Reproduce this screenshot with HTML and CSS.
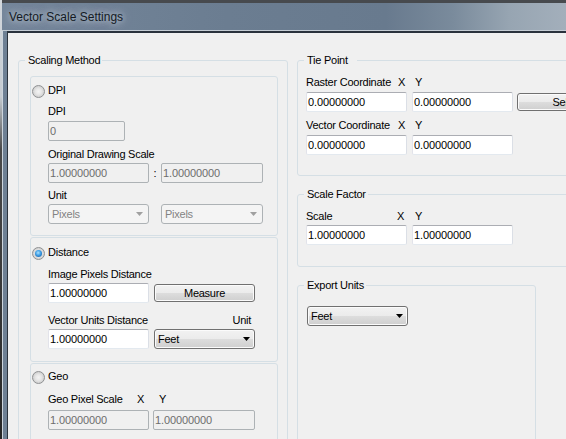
FILE: index.html
```html
<!DOCTYPE html>
<html>
<head>
<meta charset="utf-8">
<title>Vector Scale Settings</title>
<link rel="stylesheet" href="styles.css">
</head>
<body>
<div class="window">
  <div class="desk"></div>
  <div class="win">
    <div class="titlebar">Vector Scale Settings</div>
    <div class="frame">
      <div class="frame-edge"></div>
      <div class="client">

        <div class="group scaling">
          <div class="legend">Scaling Method</div>

          <div class="box dpi">
            <div class="radio-row mt7"><span class="radio"></span><span>DPI</span></div>
            <div class="lbl mt8">DPI</div>
            <div class="tb dis w77 mt3">0</div>
            <div class="lbl mt7">Original Drawing Scale</div>
            <div class="row mt2">
              <div class="tb dis w101">1.00000000</div>
              <span class="colon">:</span>
              <div class="tb dis w102">1.00000000</div>
            </div>
            <div class="lbl mt6">Unit</div>
            <div class="row mt2 gap12">
              <div class="combo dis w101"><span>Pixels</span><svg viewBox="0 0 7 4"><polygon points="0,0 7,0 3.5,4"/></svg></div>
              <div class="combo dis w102"><span>Pixels</span><svg viewBox="0 0 7 4"><polygon points="0,0 7,0 3.5,4"/></svg></div>
            </div>
          </div>

          <div class="box dist">
            <div class="radio-row mt8"><span class="radio on"><span class="dot"></span></span><span>Distance</span></div>
            <div class="lbl mt9">Image Pixels Distance</div>
            <div class="row mt2 gap5">
              <div class="tb w101">1.00000000</div>
              <div class="btn w101">Measure</div>
            </div>
            <div class="lbl split mt11"><span>Vector Units Distance</span><span>Unit</span></div>
            <div class="row mt2 gap5">
              <div class="tb w101">1.00000000</div>
              <div class="combo w101"><span>Feet</span><svg viewBox="0 0 7 4"><polygon points="0,0 7,0 3.5,4"/></svg></div>
            </div>
          </div>

          <div class="box geo">
            <div class="radio-row mt6"><span class="radio"></span><span>Geo</span></div>
            <div class="lbl xy mt10"><span class="l geo-l">Geo Pixel Scale</span><span class="x geo-x">X</span><span>Y</span></div>
            <div class="row mt4 gap4">
              <div class="tb dis w101">1.00000000</div>
              <div class="tb dis w102">1.00000000</div>
            </div>
          </div>
        </div>

        <div class="right">
          <div class="group tie">
            <div class="legend wide">Tie Point</div>
            <div class="gbody">
              <div class="lbl xy mt9"><span class="l">Raster Coordinate</span><span class="x">X</span><span>Y</span></div>
              <div class="row mt3 gap5">
                <div class="tb w101">0.00000000</div>
                <div class="tb w101">0.00000000</div>
                <div class="btn w100 ml-1">Select</div>
              </div>
              <div class="lbl xy mt7"><span class="l">Vector Coordinate</span><span class="x">X</span><span>Y</span></div>
              <div class="row mt3 gap5">
                <div class="tb w101">0.00000000</div>
                <div class="tb w101">0.00000000</div>
              </div>
            </div>
          </div>

          <div class="group scalef">
            <div class="legend">Scale Factor</div>
            <div class="gbody">
              <div class="lbl xy mt9"><span class="l sc-l">Scale</span><span class="x sc-x">X</span><span>Y</span></div>
              <div class="row mt2 gap5">
                <div class="tb w101">1.00000000</div>
                <div class="tb w101">1.00000000</div>
              </div>
            </div>
          </div>

          <div class="group export">
            <div class="legend">Export Units</div>
            <div class="gbody ex">
              <div class="combo w101 mt14"><span>Feet</span><svg viewBox="0 0 7 4"><polygon points="0,0 7,0 3.5,4"/></svg></div>
            </div>
          </div>
        </div>

      </div>
    </div>
  </div>
</div>
</body>
</html>
```
FILE: styles.css
```css
* { box-sizing: border-box; }
html, body { margin: 0; padding: 0; }
body {
  width: 566px; height: 439px; overflow: hidden;
  background: #f0f0f0;
  font-family: "Liberation Sans", Arial, sans-serif;
  font-size: 11px; line-height: 13px; color: #000;
  letter-spacing: -0.25px;
}
.window { display: flex; width: 566px; height: 439px; }
.desk { flex: none; width: 2px; background: linear-gradient(#d3d8dd 0, #c5cbd1 22%, #4a4a4a 34%, #262626 100%); }
.win { flex: 1; min-width: 0; display: flex; flex-direction: column; }
.titlebar {
  flex: none; height: 31px;
  border-top: 3px solid #474a4e; border-bottom: 1px solid #c4ccd4;
  padding: 7px 0 0 7px;
  background: linear-gradient(to right, #74869a 0%, #6b7d91 40%, #687a8e 68%, #7a8b9c 80%, #97a5b2 90%, #a3afbb 100%);
  font-size: 12px; line-height: 15px; letter-spacing: 0; color: #141a24;
  text-shadow: 0 0 6px rgba(214,224,234,.9), 0 0 12px rgba(200,212,224,.8);
}
.frame { flex: 1; min-height: 0; display: flex; }
.frame-edge { flex: none; width: 5px; border-left: 1px solid #ccd4dc; background: #6e8094; }
.client {
  flex: 1; min-width: 0;
  display: flex; align-items: flex-start; gap: 9px;
  padding: 27px 0 0 10px;
  border-left: 1px solid #2a323c; border-top: 2px solid #2a323c;
  overflow: hidden;
}

/* group boxes */
.group { flex: none; border: 1px solid #d5dfe5; border-radius: 3px; }
.legend { width: max-content; height: 13px; margin: -7px 0 0 6px; padding: 0 2px 0 3px; background: #f0f0f0; }
.legend.wide { padding-right: 9px; }
.scaling { width: 270px; height: 420px; }
.right { flex: none; width: 300px; display: flex; flex-direction: column; }
.tie { height: 116px; }
.scalef { height: 73px; margin-top: 18px; }
.export { width: 239px; height: 200px; margin-top: 18px; }
.gbody { padding-left: 8px; }
.gbody.ex { padding-left: 9px; }

.box { width: 248px; margin: 9px 0 0 11px; padding-left: 17px; border: 1px solid #d5dfe5; border-radius: 3px; }
.box + .box { margin-top: 1px; }
.dpi { height: 160px; }
.dist { height: 125px; }
.geo { height: 120px; }

/* spacing */
.mt2 { margin-top: 2px; } .mt3 { margin-top: 3px; } .mt4 { margin-top: 4px; }
.mt6 { margin-top: 6px; } .mt7 { margin-top: 7px; } .mt8 { margin-top: 8px; }
.mt9 { margin-top: 9px; } .mt10 { margin-top: 10px; } .mt11 { margin-top: 11px; }
.mt14 { margin-top: 14px; }
.ml-1 { margin-left: -1px; }

.lbl { height: 13px; white-space: nowrap; }
.lbl.split { width: 203px; display: flex; justify-content: space-between; }
.xy { display: flex; }
.xy .l { width: 92px; }
.xy .x { width: 17px; }
.xy .geo-l { width: 89px; }
.xy .geo-x { width: 22px; }
.xy .sc-l { width: 91px; }
.xy .sc-x { width: 18px; }

.row { display: flex; align-items: center; }
.gap4 { gap: 4px; } .gap5 { gap: 5px; } .gap12 { gap: 12px; }
.colon { width: 12px; text-align: center; }

.w77 { width: 77px; } .w100 { width: 100px; } .w101 { width: 101px; } .w102 { width: 102px; }

/* radio buttons */
.radio-row { display: flex; gap: 3px; height: 13px; margin-left: -16px; white-space: nowrap; }
.radio {
  flex: none; width: 13px; height: 13px; margin-top: 1px;
  border-radius: 50%; border: 1px solid #8f9193;
  background: radial-gradient(circle, #f3f3f3 0, #e8e8e8 35%, #cfcfcf 75%, #e6e6e6 100%);
  display: flex; align-items: center; justify-content: center;
}
.radio .dot {
  width: 7px; height: 7px; border-radius: 50%;
  background: radial-gradient(circle at 45% 40%, #a9e2ff 0, #3d9de4 45%, #0c4f98 100%);
}

/* text boxes */
.tb {
  flex: none; height: 20px; padding-left: 1px;
  border: 1px solid; border-color: #abadb3 #dbdfe6 #e3e9ef #e2e3ea; border-radius: 2px;
  background: #fff; line-height: 18px; letter-spacing: -0.1px;
  white-space: nowrap; overflow: hidden;
}
.tb.dis { background: #f0f0f0; border-color: #adb2b5; color: #6d6d6d; }

/* buttons & combos */
.btn, .combo {
  flex: none; border: 1px solid #707070; border-radius: 3px;
  background: linear-gradient(#f2f2f2 0, #ebebeb 50%, #dddddd 50%, #cfcfcf 100%);
  box-shadow: inset 0 0 0 1px #fbfbfb;
}
.btn { height: 18px; line-height: 16px; text-align: center; white-space: nowrap; }
.combo { height: 20px; display: flex; align-items: center; justify-content: space-between; padding: 0 4px 0 3px; }
.combo svg { width: 7px; height: 4px; fill: #000; }
.combo.dis { border-color: #adb2b5; background: #f4f4f4; box-shadow: none; color: #838383; padding-right: 5px; }
.combo.dis svg { fill: #a0a0a0; }
```
